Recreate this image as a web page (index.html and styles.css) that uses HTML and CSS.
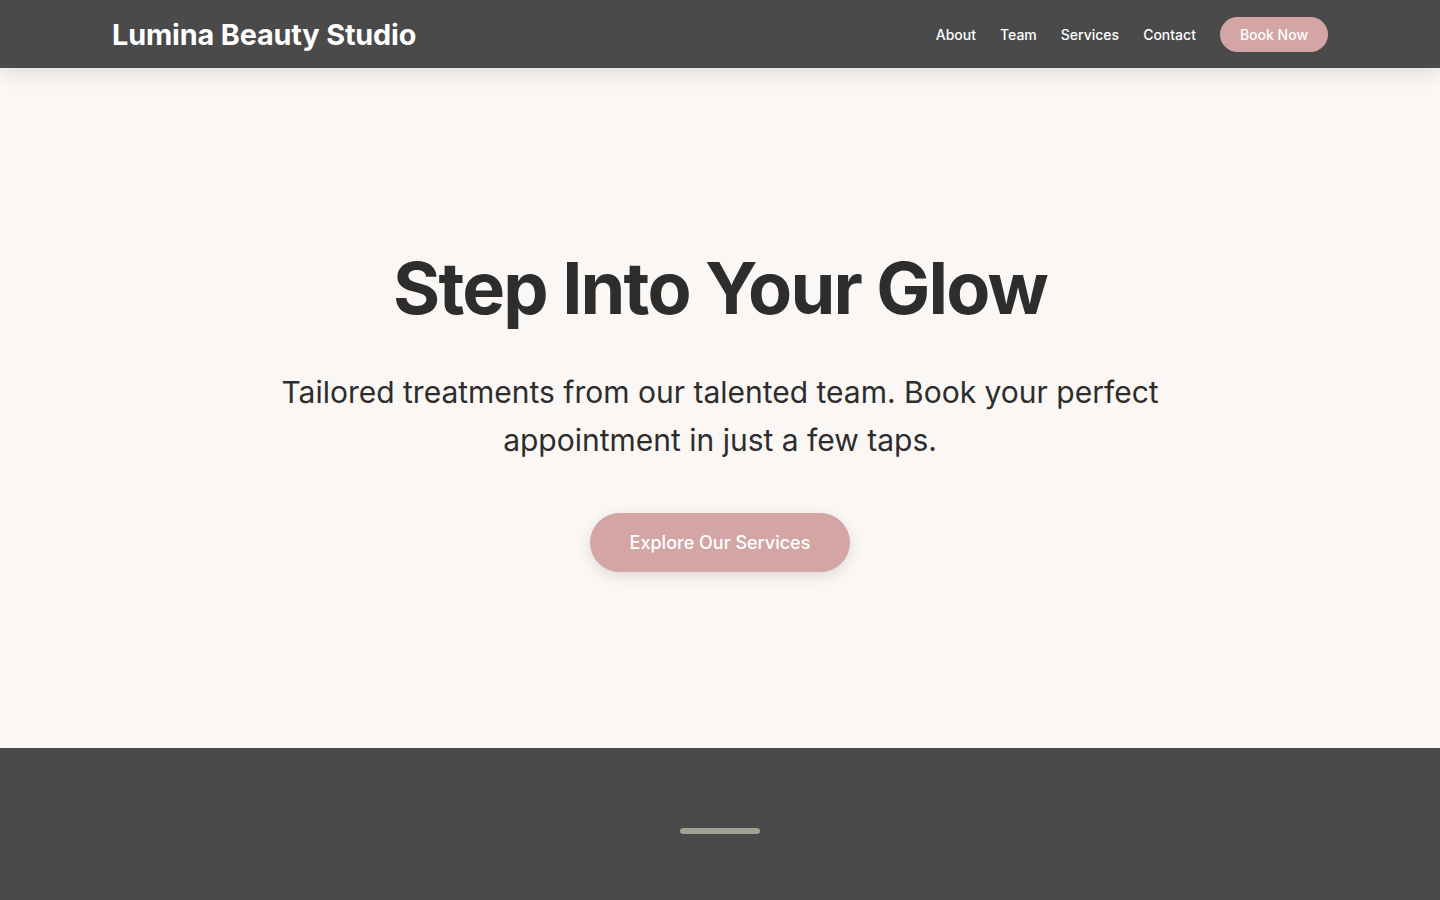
FILE: index.html
```html
<!DOCTYPE html>
<html lang="en">
<head>
<meta charset="utf-8">
<title>Lumina Beauty Studio</title>
<link rel="stylesheet" href="styles.css">
</head>
<body>
<header class="site-header">
  <div class="container header-inner">
    <a class="logo" href="#">Lumina Beauty Studio</a>
    <nav class="nav">
      <a href="#">About</a>
      <a href="#">Team</a>
      <a href="#">Services</a>
      <a href="#">Contact</a>
      <a href="#" class="btn-book">Book Now</a>
    </nav>
  </div>
</header>
<main>
  <section class="hero">
    <h1>Step Into Your Glow</h1>
    <p class="lead">Tailored treatments from our talented team. Book your perfect appointment in just a few taps.</p>
    <a href="#" class="btn-explore">Explore Our Services</a>
  </section>
  <section class="dark-band">
    <div class="handle"></div>
  </section>
</main>
</body>
</html>
```
FILE: styles.css
```css
* { box-sizing: border-box; }
html, body { margin: 0; padding: 0; }
body {
  font-family: Inter, "Noto Sans", sans-serif;
  background: #4a4a4a;
  color: #2d2d2d;
}
a { text-decoration: none; }
.container {
  max-width: 1216px;
  margin: 0 auto;
}
.site-header {
  background: #4a4a4a;
  height: 68px;
  position: relative;
  z-index: 2;
  box-shadow: 0 4px 20px rgba(0,0,0,0.12);
}
.header-inner {
  height: 68px;
  display: flex;
  align-items: center;
  justify-content: space-between;
}
.logo {
  color: #ffffff;
  font-size: 28.8px;
  font-weight: 700;
  letter-spacing: -0.005em;
}
.nav {
  display: flex;
  align-items: center;
  gap: 24px;
}
.nav a {
  color: #ffffff;
  font-size: 14px;
  font-weight: 500;
}
.nav .btn-book {
  background: #d4a5a5;
  border-radius: 999px;
  padding: 8px 20px;
  line-height: 19px;
}
.hero {
  background: #faf7f5;
  height: 680px;
  display: flex;
  flex-direction: column;
  align-items: center;
  justify-content: center;
  text-align: center;
  padding-top: 4px;
}
.hero h1 {
  margin: 0 0 40px;
  font-size: 72px;
  font-weight: 700;
  letter-spacing: -0.025em;
  line-height: 1.1;
  color: #2d2d2d;
}
.lead {
  margin: 0 0 49px;
  max-width: 900px;
  font-size: 30px;
  line-height: 48px;
  color: #2d2d2d;
}
.btn-explore {
  display: inline-block;
  background: #d4a5a5;
  color: #ffffff;
  font-size: 18px;
  font-weight: 500;
  padding: 18px 40px;
  line-height: 23px;
  border-radius: 999px;
  box-shadow: 0 4px 14px rgba(0,0,0,0.12);
}
.dark-band {
  background: #4a4a4a;
  padding-top: 80px;
  height: 152px;
  display: flex;
  justify-content: center;
}
.handle {
  width: 80px;
  height: 6px;
  border-radius: 3px;
  background: #9fa393;
}
```
